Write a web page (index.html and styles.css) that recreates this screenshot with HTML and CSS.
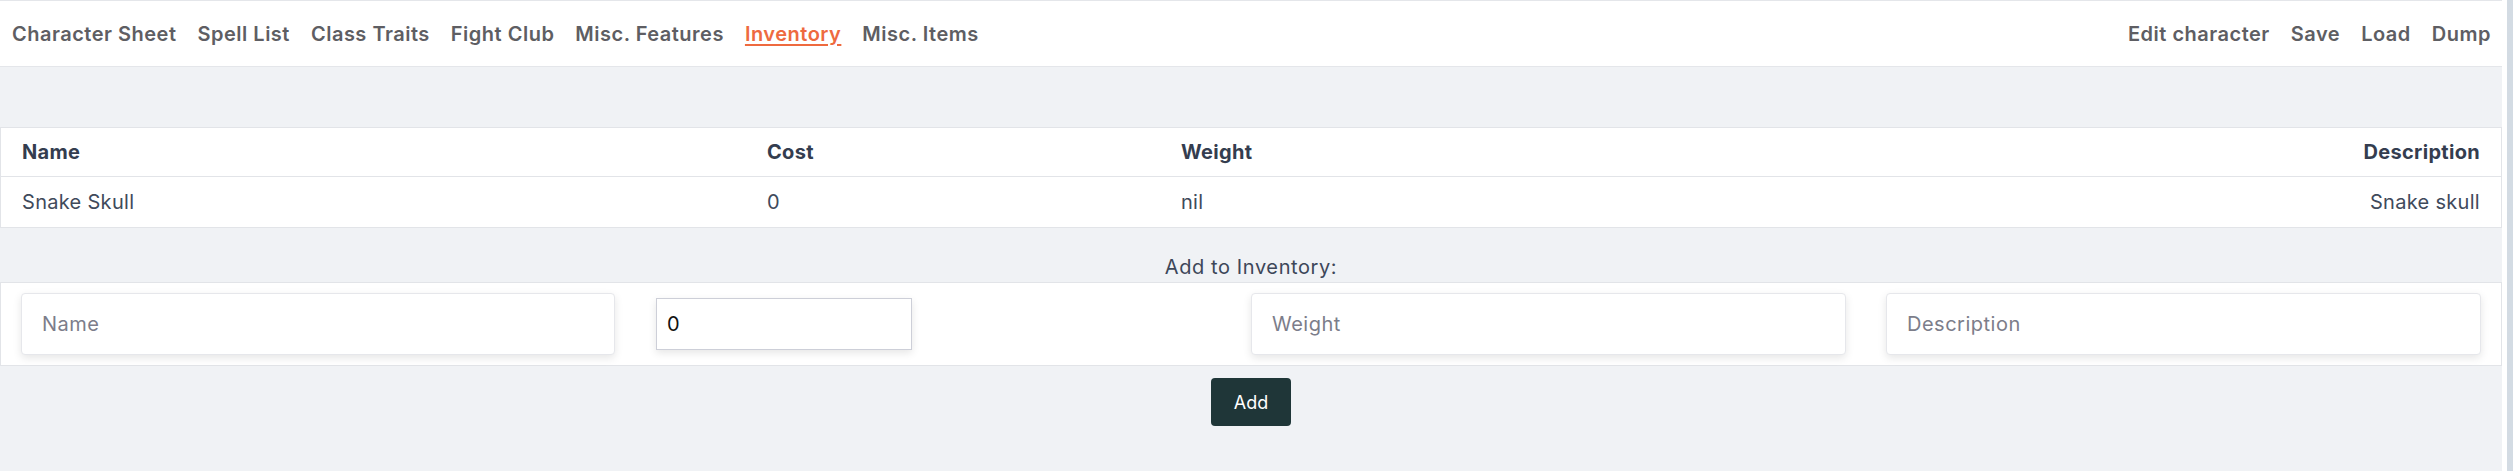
FILE: index.html
```html
<!DOCTYPE html>
<html lang="en">
<head>
<meta charset="utf-8">
<title>Inventory</title>
<link rel="stylesheet" href="styles.css">
</head>
<body>
<div class="app">
  <main class="page">
    <nav class="navbar">
      <div class="nav-group">
        <a class="nav-link" href="#">Character Sheet</a>
        <a class="nav-link" href="#">Spell List</a>
        <a class="nav-link" href="#">Class Traits</a>
        <a class="nav-link" href="#">Fight Club</a>
        <a class="nav-link" href="#">Misc. Features</a>
        <a class="nav-link active" href="#">Inventory</a>
        <a class="nav-link" href="#">Misc. Items</a>
      </div>
      <div class="nav-group">
        <a class="nav-link" href="#">Edit character</a>
        <a class="nav-link" href="#">Save</a>
        <a class="nav-link" href="#">Load</a>
        <a class="nav-link" href="#">Dump</a>
      </div>
    </nav>
    <section class="content">
      <table class="inv-table">
        <colgroup>
          <col class="c-name"><col class="c-cost"><col class="c-weight"><col>
        </colgroup>
        <thead>
          <tr><th>Name</th><th>Cost</th><th>Weight</th><th class="right">Description</th></tr>
        </thead>
        <tbody>
          <tr><td>Snake Skull</td><td>0</td><td>nil</td><td class="right">Snake skull</td></tr>
        </tbody>
      </table>
      <p class="add-label">Add to Inventory:</p>
      <form class="add-card">
        <input class="field" type="text" placeholder="Name">
        <input class="field-cost" type="number" value="0">
        <input class="field" type="text" placeholder="Weight">
        <input class="field" type="text" placeholder="Description">
      </form>
      <div class="actions"><button class="btn-add" type="button">Add</button></div>
    </section>
  </main>
  <div class="scrollbar"><div class="thumb"></div></div>
</div>
</body>
</html>
```
FILE: styles.css
```css
html, body {
  margin: 0;
  height: 100%;
  overflow: hidden;
}
body {
  font-family: Inter, "Noto Sans", sans-serif;
  background: #ffffff;
}
.app {
  display: flex;
  height: 471px;
}
.page {
  flex: 0 0 2502px;
  background: #f0f2f5;
}
.scrollbar {
  flex: 1;
  background: #ffffff;
  padding: 0 3px 0 5px;
  display: flex;
}
.thumb {
  width: 6px;
  background: #d3dbe3;
}
.navbar {
  height: 65px;
  background: #ffffff;
  border-top: 1px solid #e4e6ea;
  border-bottom: 1px solid #e4e6ea;
  display: flex;
  justify-content: space-between;
  align-items: center;
  padding: 0 11px 0 12px;
}
.nav-group {
  display: flex;
  gap: 21px;
}
.nav-link {
  font-size: 20px;
  font-weight: 600;
  letter-spacing: 0.5px;
  color: #5e5e63;
  text-decoration: none;
  line-height: 24px;
}
.nav-link.active {
  color: #ee6a3f;
  text-decoration: underline;
  text-underline-offset: 3px;
}
.content {
  padding-top: 60px;
}
.inv-table {
  width: 100%;
  table-layout: fixed;
  border-collapse: separate;
  border-spacing: 0;
  background: #ffffff;
  border: 1px solid #e2e4e8;
  font-size: 20px;
  letter-spacing: 0.3px;
}
.c-name { width: 745px; }
.c-cost { width: 414px; }
.c-weight { width: 700px; }
.inv-table th {
  text-align: left;
  font-weight: 700;
  color: #343d4f;
  padding: 12px 21px;
  line-height: 24px;
  border-bottom: 1px solid #e2e4e8;
}
.inv-table td {
  color: #3f4a5b;
  padding: 13px 21px;
  line-height: 24px;
}
.inv-table .right {
  text-align: right;
}
.add-label {
  margin: 27px 0 3px;
  text-align: center;
  font-size: 20px;
  letter-spacing: 0.6px;
  line-height: 24px;
  color: #3d4759;
}
.add-card {
  margin: 0;
  background: #ffffff;
  border: 1px solid #e2e4e8;
  padding: 10px 20px;
  display: grid;
  grid-template-columns: 594px 1fr 595px 595px;
  column-gap: 40px;
  align-items: center;
}
.field {
  box-sizing: border-box;
  height: 62px;
  width: 100%;
  border: 1px solid #e6e7eb;
  border-radius: 4px;
  padding: 0 20px;
  font-family: inherit;
  font-size: 20px;
  letter-spacing: 0.5px;
  color: #222;
  background: #fff;
  box-shadow: 0 3px 8px rgba(0, 0, 0, 0.1);
  outline: none;
}
.field::placeholder {
  color: #7c7d8a;
}
.field-cost {
  box-sizing: border-box;
  margin-left: 1px;
  height: 52px;
  width: 256px;
  border: 1px solid #cdcfd8;
  border-radius: 0;
  padding: 0 10px;
  font-family: inherit;
  font-size: 20px;
  color: #111;
  background: #fff;
  box-shadow: 0 3px 8px rgba(0, 0, 0, 0.1);
  outline: none;
  -moz-appearance: textfield;
}
.field-cost::-webkit-inner-spin-button,
.field-cost::-webkit-outer-spin-button {
  -webkit-appearance: none;
  margin: 0;
}
.actions {
  display: flex;
  justify-content: center;
  margin-top: 12px;
}
.btn-add {
  width: 80px;
  height: 48px;
  border: none;
  border-radius: 4px;
  background: #1f3638;
  color: #ffffff;
  font-family: inherit;
  font-size: 18px;
  cursor: pointer;
}
```
